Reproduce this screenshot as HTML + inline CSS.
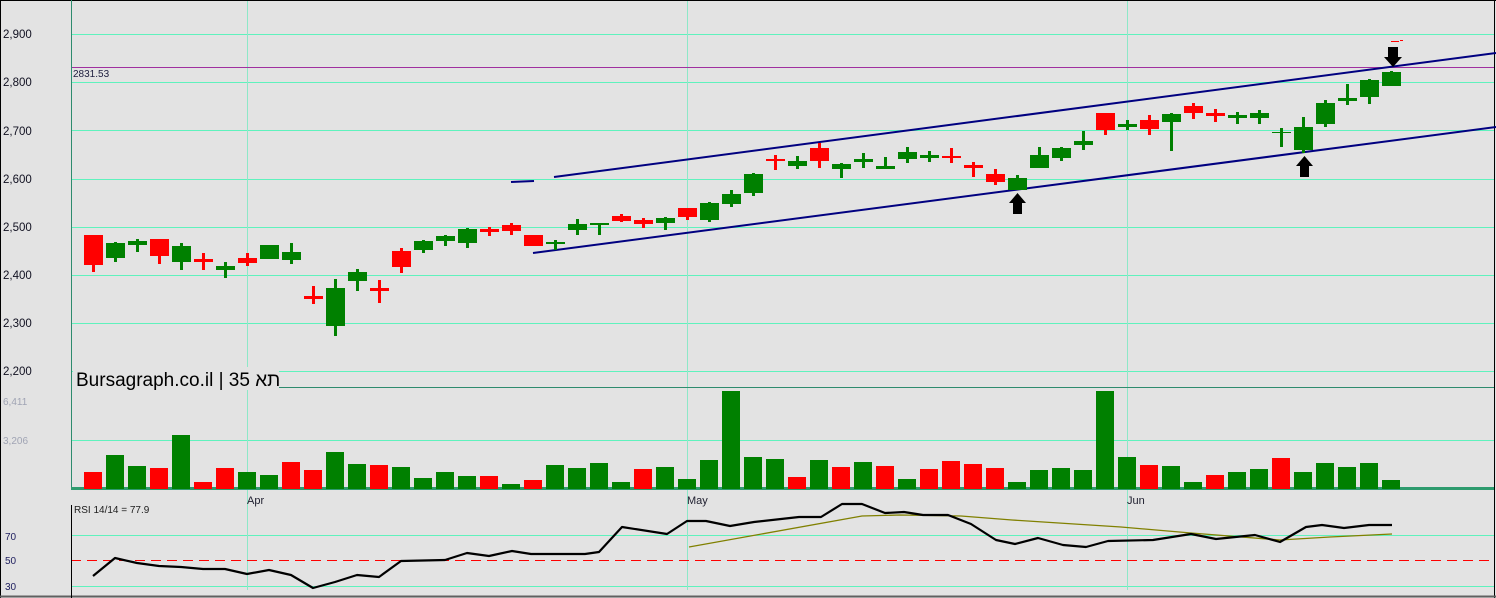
<!DOCTYPE html>
<html><head><meta charset="utf-8"><style>
html,body{margin:0;padding:0;background:#e3e3e3;}
svg{display:block;font-family:"Liberation Sans","Noto Sans CJK JP",sans-serif;}
</style></head><body>
<svg width="1496" height="598" viewBox="0 0 1496 598" xmlns="http://www.w3.org/2000/svg" shape-rendering="crispEdges">
<rect width="1496" height="598" fill="#e3e3e3"/>
<!-- grid -->
<g stroke="#5ff2bd" stroke-width="1">
<line x1="71" y1="34.5" x2="1494" y2="34.5"/>
<line x1="71" y1="82.5" x2="1494" y2="82.5"/>
<line x1="71" y1="130.5" x2="1494" y2="130.5"/>
<line x1="71" y1="179.5" x2="1494" y2="179.5"/>
<line x1="71" y1="227.5" x2="1494" y2="227.5"/>
<line x1="71" y1="275.5" x2="1494" y2="275.5"/>
<line x1="71" y1="323.5" x2="1494" y2="323.5"/>
<line x1="71" y1="371.5" x2="1494" y2="371.5"/>
<line x1="71" y1="440.5" x2="1494" y2="440.5"/>
<line x1="71" y1="535.5" x2="1494" y2="535.5"/>
<line x1="71" y1="586.5" x2="1494" y2="586.5"/>
</g>
<g stroke="#8de8c8" stroke-width="1">
<line x1="247.5" y1="0" x2="247.5" y2="590"/>
<line x1="687.5" y1="0" x2="687.5" y2="590"/>
<line x1="1127.5" y1="0" x2="1127.5" y2="590"/>
</g>
<line x1="71" y1="560.5" x2="1494" y2="560.5" stroke="#ff0000" stroke-width="1" stroke-dasharray="10,6"/>
<line x1="71" y1="67.5" x2="1494" y2="67.5" stroke="#a030a0" stroke-width="1"/>
<text x="73" y="77" font-size="10" fill="#202040">2831.53</text>
<!-- borders -->
<line x1="0.5" y1="0" x2="0.5" y2="598" stroke="#000"/>
<line x1="0" y1="0.5" x2="1496" y2="0.5" stroke="#000"/>
<line x1="1494.5" y1="0" x2="1494.5" y2="598" stroke="#000"/>
<line x1="0" y1="596.5" x2="1496" y2="596.5" stroke="#606060" stroke-width="2"/>
<line x1="71.5" y1="0" x2="71.5" y2="490" stroke="#2e8b6e"/>
<line x1="71.5" y1="505" x2="71.5" y2="598" stroke="#000"/>
<line x1="279" y1="387.5" x2="1494" y2="387.5" stroke="#2e8b6e"/>
<rect x="71" y="487" width="1423" height="3" fill="#2e9b6e"/>
<!-- axis labels -->
<g font-size="11.5" fill="#101020">
<text x="3" y="38">2,900</text><text x="3" y="86">2,800</text><text x="3" y="135">2,700</text>
<text x="3" y="183">2,600</text><text x="3" y="231">2,500</text><text x="3" y="279">2,400</text>
<text x="3" y="327">2,300</text><text x="3" y="375">2,200</text>
</g>
<g font-size="10" fill="#a0a4b4"><text x="3" y="405">6,411</text><text x="3" y="444">3,206</text></g>
<g font-size="10" fill="#202060"><text x="5" y="540">70</text><text x="5" y="564">50</text><text x="5" y="590">30</text></g>
<g font-size="11" fill="#202030"><text x="247" y="504">Apr</text><text x="687" y="504">May</text><text x="1127" y="504">Jun</text></g>
<text x="74" y="513" font-size="10" fill="#202020">RSI 14/14 = 77.9</text>
<!-- title -->
<rect x="73" y="367" width="206" height="23" fill="#e3e3e3"/>
<text x="76" y="386" font-size="19" fill="#000">Bursagraph.co.il | 35 תא</text>
<!-- channel -->
<g stroke="#000080" stroke-width="2" shape-rendering="auto">
<line x1="511" y1="182" x2="534" y2="181"/>
<line x1="554" y1="177" x2="1496" y2="53"/>
<line x1="533" y1="253" x2="1496" y2="127"/>
</g>
<!-- candles green -->
<g fill="#008000">
<rect x="114" y="242" width="3" height="20"/><rect x="106" y="243" width="19" height="15"/>
<rect x="136" y="239" width="3" height="13"/><rect x="128" y="241" width="19" height="4"/>
<rect x="180" y="243" width="3" height="27"/><rect x="172" y="246" width="19" height="16"/>
<rect x="224" y="262" width="3" height="16"/><rect x="216" y="266" width="19" height="4"/>
<rect x="260" y="245" width="19" height="14"/>
<rect x="290" y="243" width="3" height="21"/><rect x="282" y="252" width="19" height="8"/>
<rect x="334" y="279" width="3" height="57"/><rect x="326" y="288" width="19" height="38"/>
<rect x="356" y="269" width="3" height="22"/><rect x="348" y="272" width="19" height="9"/>
<rect x="422" y="240" width="3" height="13"/><rect x="414" y="241" width="19" height="9"/>
<rect x="444" y="235" width="3" height="11"/><rect x="436" y="236" width="19" height="5"/>
<rect x="466" y="228" width="3" height="20"/><rect x="458" y="229" width="19" height="14"/>
<rect x="554" y="240" width="3" height="10"/><rect x="546" y="242" width="19" height="2"/>
<rect x="576" y="219" width="3" height="16"/><rect x="568" y="224" width="19" height="6"/>
<rect x="598" y="223" width="3" height="12"/><rect x="590" y="223" width="19" height="2"/>
<rect x="664" y="217" width="3" height="13"/><rect x="656" y="218" width="19" height="5"/>
<rect x="708" y="202" width="3" height="20"/><rect x="700" y="203" width="19" height="17"/>
<rect x="730" y="190" width="3" height="17"/><rect x="722" y="194" width="19" height="10"/>
<rect x="752" y="173" width="3" height="23"/><rect x="744" y="174" width="19" height="19"/>
<rect x="796" y="156" width="3" height="13"/><rect x="788" y="161" width="19" height="5"/>
<rect x="840" y="163" width="3" height="15"/><rect x="832" y="164" width="19" height="5"/>
<rect x="862" y="153" width="3" height="15"/><rect x="854" y="159" width="19" height="3"/>
<rect x="884" y="157" width="3" height="12"/><rect x="876" y="166" width="19" height="3"/>
<rect x="906" y="147" width="3" height="16"/><rect x="898" y="152" width="19" height="7"/>
<rect x="928" y="151" width="3" height="11"/><rect x="920" y="155" width="19" height="3"/>
<rect x="1016" y="175" width="3" height="15"/><rect x="1008" y="178" width="19" height="12"/>
<rect x="1038" y="147" width="3" height="21"/><rect x="1030" y="155" width="19" height="13"/>
<rect x="1060" y="147" width="3" height="14"/><rect x="1052" y="148" width="19" height="10"/>
<rect x="1082" y="131" width="3" height="19"/><rect x="1074" y="141" width="19" height="4"/>
<rect x="1126" y="120" width="3" height="10"/><rect x="1118" y="124" width="19" height="3"/>
<rect x="1170" y="113" width="3" height="38"/><rect x="1162" y="114" width="19" height="8"/>
<rect x="1236" y="112" width="3" height="12"/><rect x="1228" y="115" width="19" height="3"/>
<rect x="1258" y="110" width="3" height="14"/><rect x="1250" y="113" width="19" height="5"/>
<rect x="1280" y="128" width="3" height="19"/><rect x="1272" y="132" width="19" height="1"/>
<rect x="1302" y="117" width="3" height="36"/><rect x="1294" y="127" width="19" height="23"/>
<rect x="1324" y="100" width="3" height="27"/><rect x="1316" y="103" width="19" height="21"/>
<rect x="1346" y="84" width="3" height="21"/><rect x="1338" y="98" width="19" height="3"/>
<rect x="1368" y="79" width="3" height="25"/><rect x="1360" y="80" width="19" height="17"/>
<rect x="1390" y="71" width="3" height="15"/><rect x="1382" y="72" width="19" height="14"/>
</g>
<!-- candles red -->
<g fill="#ff0000">
<rect x="92" y="235" width="3" height="37"/><rect x="84" y="235" width="19" height="30"/>
<rect x="158" y="239" width="3" height="25"/><rect x="150" y="239" width="19" height="17"/>
<rect x="202" y="253" width="3" height="17"/><rect x="194" y="259" width="19" height="3"/>
<rect x="246" y="253" width="3" height="13"/><rect x="238" y="258" width="19" height="5"/>
<rect x="312" y="286" width="3" height="18"/><rect x="304" y="296" width="19" height="3"/>
<rect x="378" y="280" width="3" height="23"/><rect x="370" y="288" width="19" height="3"/>
<rect x="400" y="248" width="3" height="25"/><rect x="392" y="251" width="19" height="16"/>
<rect x="488" y="227" width="3" height="9"/><rect x="480" y="229" width="19" height="3"/>
<rect x="510" y="223" width="3" height="12"/><rect x="502" y="225" width="19" height="6"/>
<rect x="524" y="235" width="19" height="11"/>
<rect x="620" y="214" width="3" height="8"/><rect x="612" y="216" width="19" height="5"/>
<rect x="642" y="218" width="3" height="10"/><rect x="634" y="220" width="19" height="4"/>
<rect x="686" y="208" width="3" height="12"/><rect x="678" y="208" width="19" height="9"/>
<rect x="774" y="155" width="3" height="15"/><rect x="766" y="159" width="19" height="2"/>
<rect x="818" y="143" width="3" height="25"/><rect x="810" y="148" width="19" height="13"/>
<rect x="950" y="148" width="3" height="15"/><rect x="942" y="156" width="19" height="2"/>
<rect x="972" y="162" width="3" height="15"/><rect x="964" y="165" width="19" height="3"/>
<rect x="994" y="169" width="3" height="16"/><rect x="986" y="174" width="19" height="8"/>
<rect x="1104" y="113" width="3" height="22"/><rect x="1096" y="113" width="19" height="17"/>
<rect x="1148" y="115" width="3" height="20"/><rect x="1140" y="120" width="19" height="9"/>
<rect x="1192" y="103" width="3" height="16"/><rect x="1184" y="106" width="19" height="7"/>
<rect x="1214" y="109" width="3" height="13"/><rect x="1206" y="113" width="19" height="3"/>
<rect x="1391" y="41" width="8" height="1"/><rect x="1400" y="40" width="3" height="1"/>
</g>
<!-- arrows -->
<g fill="#000" shape-rendering="auto">
<rect x="1388" y="47" width="10" height="11"/><polygon points="1384,57 1402,57 1393,67"/>
<rect x="1300" y="166" width="9" height="11"/><polygon points="1296,166 1313,166 1304.5,156"/>
<rect x="1013" y="203" width="9" height="11"/><polygon points="1009,203 1026,203 1017.5,193"/>
</g>
<!-- volume green -->
<g fill="#008000">
<rect x="106" y="455" width="18" height="34"/><rect x="128" y="466" width="18" height="23"/>
<rect x="172" y="435" width="18" height="54"/><rect x="238" y="472" width="18" height="17"/>
<rect x="260" y="475" width="18" height="14"/><rect x="326" y="452" width="18" height="37"/>
<rect x="348" y="464" width="18" height="25"/><rect x="392" y="467" width="18" height="22"/>
<rect x="414" y="478" width="18" height="11"/><rect x="436" y="472" width="18" height="17"/>
<rect x="458" y="476" width="18" height="13"/><rect x="502" y="484" width="18" height="5"/>
<rect x="546" y="465" width="18" height="24"/><rect x="568" y="468" width="18" height="21"/>
<rect x="590" y="463" width="18" height="26"/><rect x="612" y="482" width="18" height="7"/>
<rect x="656" y="467" width="18" height="22"/><rect x="678" y="479" width="18" height="10"/>
<rect x="700" y="460" width="18" height="29"/><rect x="722" y="391" width="18" height="98"/>
<rect x="744" y="457" width="18" height="32"/><rect x="766" y="459" width="18" height="30"/>
<rect x="810" y="460" width="18" height="29"/><rect x="854" y="462" width="18" height="27"/>
<rect x="898" y="479" width="18" height="10"/><rect x="1008" y="482" width="18" height="7"/>
<rect x="1030" y="470" width="18" height="19"/><rect x="1052" y="468" width="18" height="21"/>
<rect x="1074" y="470" width="18" height="19"/><rect x="1096" y="391" width="18" height="98"/>
<rect x="1118" y="457" width="18" height="32"/><rect x="1162" y="466" width="18" height="23"/>
<rect x="1184" y="482" width="18" height="7"/><rect x="1228" y="472" width="18" height="17"/>
<rect x="1250" y="469" width="18" height="20"/><rect x="1294" y="472" width="18" height="17"/>
<rect x="1316" y="463" width="18" height="26"/><rect x="1338" y="467" width="18" height="22"/>
<rect x="1360" y="463" width="18" height="26"/><rect x="1382" y="480" width="18" height="9"/>
</g>
<g fill="#ff0000">
<rect x="84" y="472" width="18" height="17"/><rect x="150" y="468" width="18" height="21"/>
<rect x="194" y="482" width="18" height="7"/><rect x="216" y="468" width="18" height="21"/>
<rect x="282" y="462" width="18" height="27"/><rect x="304" y="470" width="18" height="19"/>
<rect x="370" y="465" width="18" height="24"/><rect x="480" y="476" width="18" height="13"/>
<rect x="524" y="480" width="18" height="9"/><rect x="634" y="469" width="18" height="20"/>
<rect x="788" y="477" width="18" height="12"/><rect x="832" y="467" width="18" height="22"/>
<rect x="876" y="466" width="18" height="23"/><rect x="920" y="469" width="18" height="20"/>
<rect x="942" y="461" width="18" height="28"/><rect x="964" y="464" width="18" height="25"/>
<rect x="986" y="468" width="18" height="21"/><rect x="1140" y="465" width="18" height="24"/>
<rect x="1206" y="475" width="18" height="14"/><rect x="1272" y="458" width="18" height="31"/>
</g>
<!-- RSI -->
<polyline shape-rendering="auto" fill="none" stroke="#808000" stroke-width="1.3" points="689,547 862,516 900,515 961,516 1012,520 1121,527 1191,533 1280,540 1330,537 1392,534"/>
<polyline shape-rendering="auto" fill="none" stroke="#000" stroke-width="2.2" stroke-linejoin="round" points="93,576 115,558 137,563 159,566 181,567 203,569 225,569 247,574 269,570 291,575 313,588 335,582 357,575 379,577 401,561 445,560 467,553 489,556 512,551 531,554 585,554 599,552 622,527 667,534 687,521 706,521 730,526 754,522 799,517 821,517 842,504 862,504 885,513 904,512 923,515 948,515 971,524 996,540 1015,544 1038,538 1063,545 1086,547 1108,541 1153,540 1191,534 1216,539 1255,535 1280,542 1306,527 1322,525 1344,528 1369,525 1392,525"/>
</svg>
</body></html>
